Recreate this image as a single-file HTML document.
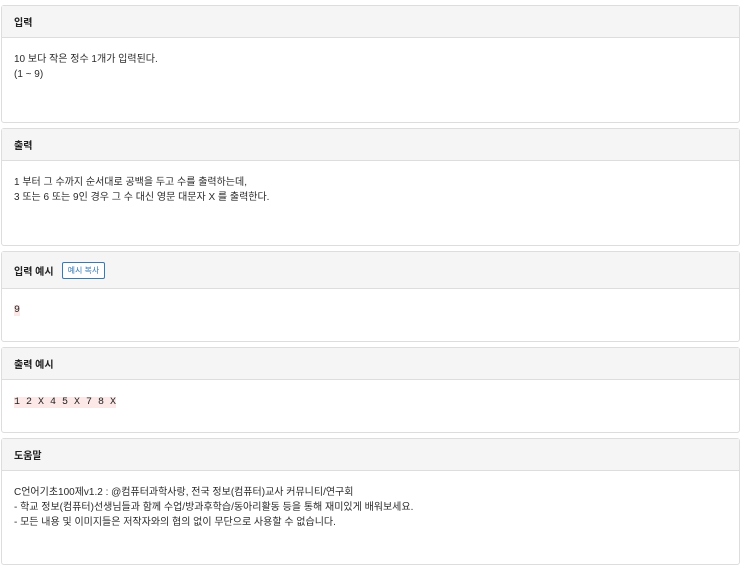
<!DOCTYPE html>
<html><head><meta charset="utf-8"><style>
body{margin:0;width:744px;height:569px;background:#fff;font-family:"Liberation Sans","Noto Sans CJK KR",sans-serif;font-size:10px;color:#2a2a2a;position:relative;overflow:hidden}
.p{position:absolute;left:1px;width:739px;border:1px solid #ddd;border-radius:3px;background:#fff;box-sizing:border-box}
.h{background:#f5f5f5;border-bottom:1px solid #ddd;box-sizing:border-box;padding:0 12px;font-weight:bold;color:#222;display:flex;align-items:center}
.b{padding:14px 12px;line-height:15px}
.btn{margin-left:8px;border:1px solid #337ab7;color:#337ab7;border-radius:2px;font-size:8px;font-weight:normal;padding:2px 5px;background:#fff;line-height:11px}
code{font-family:"Liberation Mono","Noto Sans CJK KR",monospace;background:#fde8e8;color:#222;font-size:10px}
</style></head><body>
<div class="p" style="top:5px;height:118px"><div class="h" style="height:32px">입력</div><div class="b">10 보다 작은 정수 1개가 입력된다.<br>(1 ~ 9)</div></div>
<div class="p" style="top:128px;height:118px"><div class="h" style="height:32px">출력</div><div class="b">1 부터 그 수까지 순서대로 공백을 두고 수를 출력하는데,<br>3 또는 6 또는 9인 경우 그 수 대신 영문 대문자 X 를 출력한다.</div></div>
<div class="p" style="top:251px;height:91px"><div class="h" style="height:37px">입력 예시<span class="btn">예시 복사</span></div><div class="b" style="padding-top:13px"><code>9</code></div></div>
<div class="p" style="top:347px;height:86px"><div class="h" style="height:32px">출력 예시</div><div class="b"><code>1 2 X 4 5 X 7 8 X</code></div></div>
<div class="p" style="top:438px;height:127px"><div class="h" style="height:32px">도움말</div><div class="b">C언어기초100제v1.2 : @컴퓨터과학사랑, 전국 정보(컴퓨터)교사 커뮤니티/연구회<br>- 학교 정보(컴퓨터)선생님들과 함께 수업/방과후학습/동아리활동 등을 통해 재미있게 배워보세요.<br>- 모든 내용 및 이미지들은 저작자와의 협의 없이 무단으로 사용할 수 없습니다.</div></div>
</body></html>
